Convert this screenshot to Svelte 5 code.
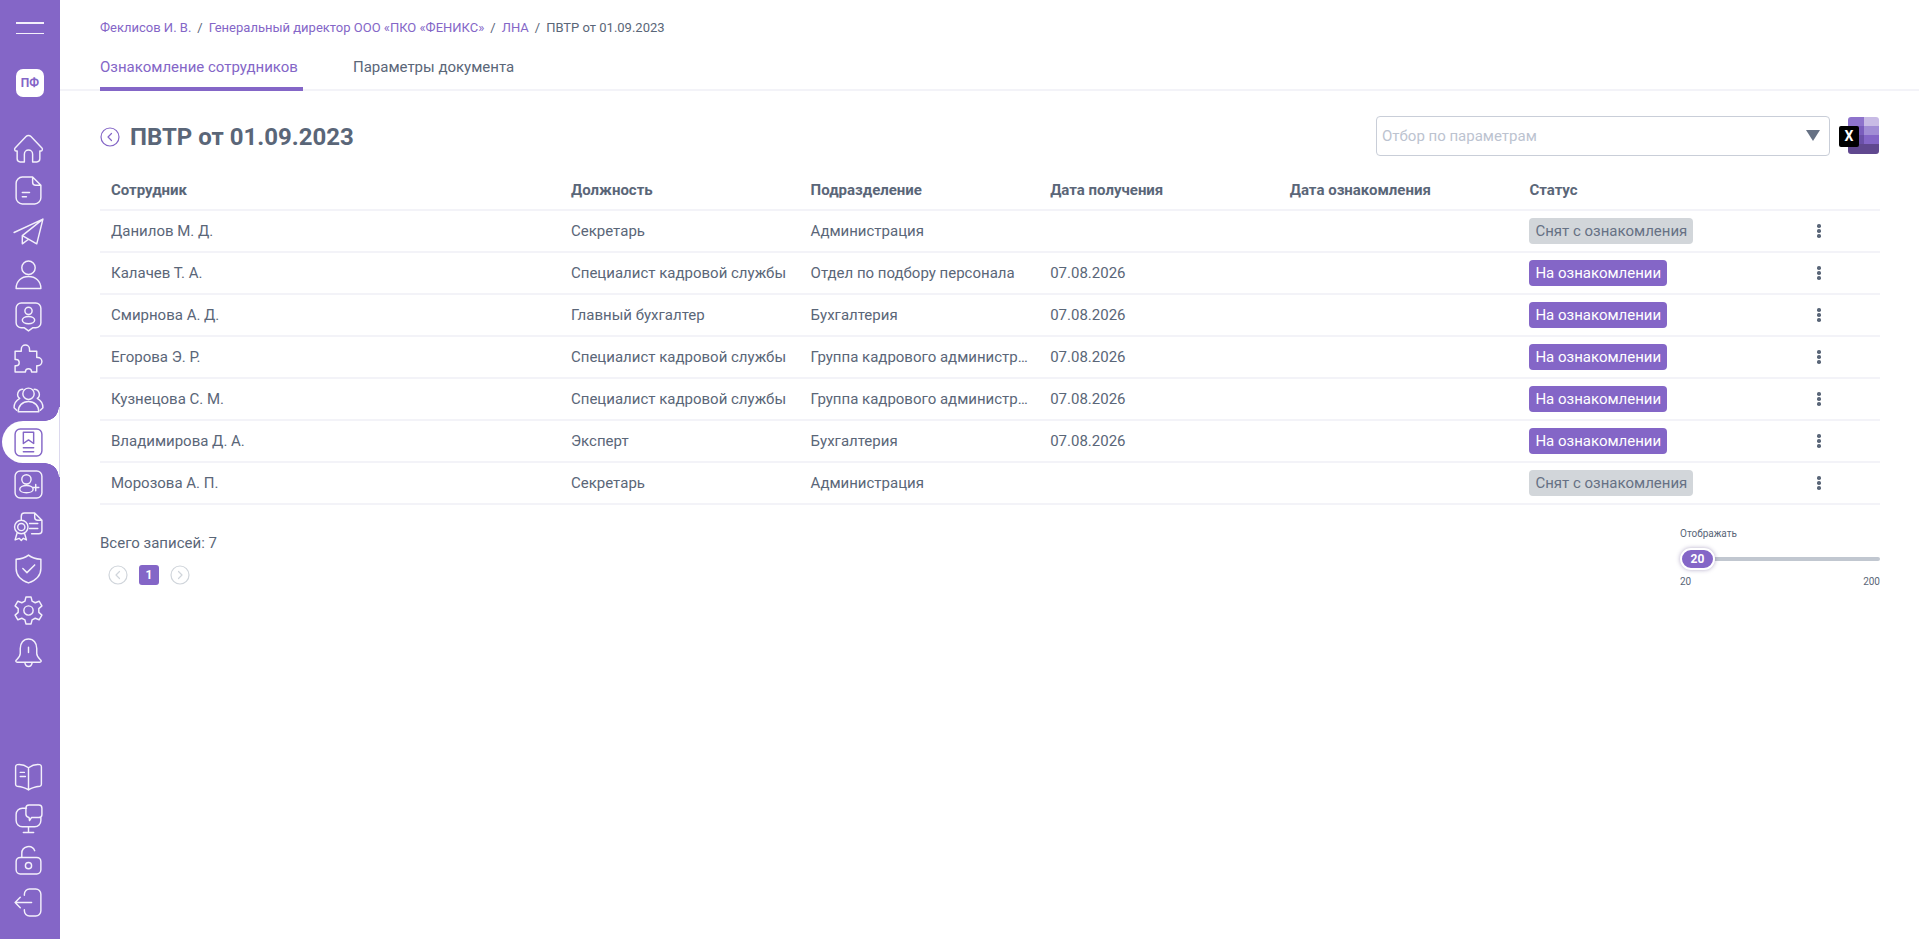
<script>
    const topIcons = [
        'M3 15.500 13.600 4.400a3.300 3.300 0 0 1 4.800 0L29 15.500c1 1.200.3 3-1.200 3H27V26a3 3 0 0 1-3 3h-4v-7.500a4 4 0 0 0-8 0V29H8a3 3 0 0 1-3-3v-7.500H4.200c-1.500 0-2.200-1.800-1.200-3Z',
        'M20 3H10a6 6 0 0 0-6 6v14a6 6 0 0 0 6 6h12a6 6 0 0 0 6-6V11M20 3l8 8h-5a3 3 0 0 1-3-3ZM10 18h7M10 22h4',
        'M2 16 30 3 24 27 10 19 30 3M10 19v8l6-4.500',
        'M16 3a6.500 6.500 0 1 1 0 13 6.500 6.500 0 0 1 0-13ZM4 29.500c0-7 5-11.500 12-11.500s12 4.500 12 11.500Z',
        'M9 3h14a5 5 0 0 1 5 5v14a5 5 0 0 1-5 5h-3l-4 3-4-3H9a5 5 0 0 1-5-5V8a5 5 0 0 1 5-5ZM16 7a3.500 3.500 0 1 1 0 7 3.500 3.500 0 0 1 0-7ZM16 16c3.500 0 6 1.600 6 3.500S19.500 23 16 23s-6-1.600-6-3.500S12.500 16 16 16Z',
        'M3 9h6V7a4 4 0 0 1 8 0v2h7v6h1a4 4 0 0 1 0 8h-1v6h-5a3 3 0 0 0-6 0H3v-6h1a3 3 0 0 0 0-6H3Z',
        'M16 4a5.500 5.500 0 1 1 0 11 5.500 5.500 0 0 1 0-11ZM6 27c0-6 4-10 10-10s10 4 10 10ZM10.500 5a5 5 0 0 0-3 9C4 16 2 19 2 23l2.500 2.500M21.500 5a5 5 0 0 1 3 9c3.500 2 5.500 5 5.500 9l-2.500 2.500'
    ];
    const lowerIcons = [
        'M8 3h16a5 5 0 0 1 5 5v16a5 5 0 0 1-5 5H8a5 5 0 0 1-5-5V8a5 5 0 0 1 5-5ZM14 6.500a4.500 4.500 0 1 1 0 9 4.500 4.500 0 0 1 0-9ZM14 17c3.800 0 6.500 1.600 6.500 3.500S17.800 24 14 24s-6.500-1.600-6.500-3.500S10.200 17 14 17ZM23 16v6M20 19h6',
        'M9 10V6a3 3 0 0 1 3-3h10l7 7v10a3 3 0 0 1-3 3h-7M22 3v4a3 3 0 0 0 3 3h4M17 13h8M17 18h8M9 10a6.500 6.500 0 1 1 0 13 6.500 6.500 0 0 1 0-13ZM9 13a3.500 3.500 0 1 1 0 7 3.500 3.500 0 0 1 0-7ZM5 22l-2 7 4-1.500 2 2 2-2 3 1.500-2-7',
        'M16 3c3 2.500 7 3.800 12 4v9c0 7-5 11.500-12 14-7-2.500-12-7-12-14V7c5-.2 9-1.500 12-4ZM10.500 16l4 4 7.500-7.500',
        'M13.500 3h5l1 4 3 1.500 3.800-1.500 2.700 4.500-3 2.700v3.600l3 2.700-2.700 4.500-3.800-1.500-3 1.500-1 4h-5l-1-4-3-1.500-3.800 1.500L3 20.500l3-2.700v-3.600l-3-2.700L5.700 7l3.800 1.500 3-1.500ZM16 11.500a4.500 4.500 0 1 1 0 9 4.500 4.500 0 0 1 0-9Z',
        'M16 3c5 0 8 4 8 9v5c0 3 2 4.500 4 6.500.6.800.2 2-1 2H5c-1.200 0-1.600-1.200-1-2 2-2 4-3.500 4-6.500v-5c0-5 3-9 8-9ZM12.500 26c.5 2.500 2 3.500 3.500 3.500s3-1 3.500-3.500M16 11v5'
    ];
    const bottomIcons = [
        'M16 7.500C12.500 5 8 4 5 4.500 4 4.700 3.500 5.500 3.500 6.500v17c0 1 .5 1.800 1.500 2 4 .5 8 1.500 11 3.500 3-2 7-3 11-3.500 1-.2 1.500-1 1.500-2v-17c0-1-.5-1.800-1.500-2-3-.5-7.500.5-11 3ZM16 7.500V29M8 12h4M8 16h5',
        'M14 6H10a6 6 0 0 0-6 6v6a6 6 0 0 0 6 6h12a6 6 0 0 0 6-6v-3M16 24v5M11 29.500h10M17 3h9a3 3 0 0 1 3 3v6a3 3 0 0 1-3 3h-7l-2 3-.5-3a3.500 3.500 0 0 1-3-3V6a3 3 0 0 1 3-3Z',
        'M4 17a4 4 0 0 1 4-4h16a4 4 0 0 1 4 4v8a4 4 0 0 1-4 4H8a4 4 0 0 1-4-4ZM16 18a3 3 0 1 1 0 6 3 3 0 0 1 0-6ZM9.500 13V9a6.500 6.500 0 0 1 12.500-2.500',
        'M12 9V8a5 5 0 0 1 5-5h6a5 5 0 0 1 5 5v16a5 5 0 0 1-5 5h-6a5 5 0 0 1-5-5v-1M3 16h16M3 16l5-5M3 16l5 5'
    ];

    const rows = [
        { name: 'Данилов М. Д.', post: 'Секретарь', dept: 'Администрация', date: '', active: false },
        { name: 'Калачев Т. А.', post: 'Специалист кадровой службы', dept: 'Отдел по подбору персонала', date: '07.08.2026', active: true },
        { name: 'Смирнова А. Д.', post: 'Главный бухгалтер', dept: 'Бухгалтерия', date: '07.08.2026', active: true },
        { name: 'Егорова Э. Р.', post: 'Специалист кадровой службы', dept: 'Группа кадрового администрирования', date: '07.08.2026', active: true },
        { name: 'Кузнецова С. М.', post: 'Специалист кадровой службы', dept: 'Группа кадрового администрирования', date: '07.08.2026', active: true },
        { name: 'Владимирова Д. А.', post: 'Эксперт', dept: 'Бухгалтерия', date: '07.08.2026', active: true },
        { name: 'Морозова А. П.', post: 'Секретарь', dept: 'Администрация', date: '', active: false }
    ];
</script>

<div class="page">
    <aside class="sidebar">
        <div class="burger"><span></span><span></span></div>
        <div class="logo">ПФ</div>

        <nav class="menu">
            {#each topIcons as d}
                <div class="item"><svg viewBox="0 0 32 32"><path {d} /></svg></div>
            {/each}
            <div class="item active">
                <svg viewBox="0 0 32 32">
                    <path d="M8 3h16a5 5 0 0 1 5 5v16a5 5 0 0 1-5 5H8a5 5 0 0 1-5-5V8a5 5 0 0 1 5-5ZM11 6h10v11l-5-3.500-5 3.500ZM11 21h10M11 25h10" />
                </svg>
            </div>
            {#each lowerIcons as d}
                <div class="item"><svg viewBox="0 0 32 32"><path {d} /></svg></div>
            {/each}
        </nav>

        <nav class="menu bottom">
            {#each bottomIcons as d}
                <div class="item"><svg viewBox="0 0 32 32"><path {d} /></svg></div>
            {/each}
        </nav>
    </aside>

    <main class="main">
        <header class="top">
            <div class="crumbs">
                <a href="/">Феклисов И. В.</a><i>/</i><a href="/">Генеральный директор ООО «ПКО «ФЕНИКС»</a><i>/</i><a href="/">ЛНА</a><i>/</i><span>ПВТР от 01.09.2023</span>
            </div>
            <div class="tabs">
                <div class="tab on">Ознакомление сотрудников</div>
                <div class="tab">Параметры документа</div>
            </div>
        </header>

        <section class="content">
            <div class="titlebar">
                <div class="title">
                    <svg class="back" viewBox="0 0 20 20"><circle cx="10" cy="10" r="9" /><path d="M11.500 6.500 8 10l3.500 3.500" /></svg>
                    <h1>ПВТР от 01.09.2023</h1>
                </div>
                <div class="tools">
                    <div class="select">
                        <span>Отбор по параметрам</span>
                        <b class="caret"></b>
                    </div>
                    <div class="excel">
                        <div class="sheet"><i></i><i></i><i></i><i></i><i></i><i></i><i></i><i></i></div>
                        <div class="x">X</div>
                    </div>
                </div>
            </div>

            <div class="table">
                <div class="row head">
                    <div>Сотрудник</div>
                    <div>Должность</div>
                    <div>Подразделение</div>
                    <div>Дата получения</div>
                    <div>Дата ознакомления</div>
                    <div>Статус</div>
                    <div></div>
                </div>
                {#each rows as r}
                    <div class="row">
                        <div>{r.name}</div>
                        <div>{r.post}</div>
                        <div class="dept">{r.dept}</div>
                        <div>{r.date}</div>
                        <div></div>
                        <div><span class="badge" class:violet={r.active}>{r.active ? 'На ознакомлении' : 'Снят с ознакомления'}</span></div>
                        <div class="dots"><i></i><i></i><i></i></div>
                    </div>
                {/each}
            </div>

            <div class="foot">
                <div>
                    <div class="total">Всего записей: 7</div>
                    <div class="pager">
                        <svg viewBox="0 0 20 20"><circle cx="10" cy="10" r="9" /><path d="M11.500 6.500 8 10l3.500 3.500" /></svg>
                        <span class="num">1</span>
                        <svg viewBox="0 0 20 20"><circle cx="10" cy="10" r="9" /><path d="M8.500 6.500 12 10l-3.500 3.500" /></svg>
                    </div>
                </div>
                <div class="range">
                    <div class="cap">Отображать</div>
                    <div class="track"><span class="thumb">20</span></div>
                    <div class="ends"><span>20</span><span>200</span></div>
                </div>
            </div>
        </section>
    </main>
</div>

<style>
    :global(body) {
        margin: 0;
        background: #fff;
        font-family: Roboto, "Liberation Sans", sans-serif;
    }

    .page {
        display: flex;
        height: 939px;
        overflow: hidden;
        color: #5a6678;
        font-size: 15px;
    }

    .sidebar {
        width: 60px;
        flex: none;
        background: #8466c7;
        display: flex;
        flex-direction: column;
        align-items: center;
    }

    .burger {
        width: 28px;
        margin-top: 22px;
        height: 12px;
        display: flex;
        flex-direction: column;
        justify-content: space-between;
    }

    .burger span {
        height: 1.500px;
        background: #f3f0fb;
    }

    .logo {
        width: 28px;
        height: 28px;
        margin-top: 35px;
        background: #fff;
        border-radius: 7px;
        color: #8466c7;
        font-size: 12px;
        font-weight: 700;
        display: flex;
        align-items: center;
        justify-content: center;
    }

    .menu {
        width: 100%;
        margin-top: 30px;
        display: flex;
        flex-direction: column;
    }

    .menu.bottom {
        margin-top: auto;
        margin-bottom: 16px;
    }

    .item {
        height: 42px;
        padding-right: 4px;
        display: flex;
        align-items: center;
        justify-content: center;
        position: relative;
    }

    .item svg {
        width: 33px;
        height: 33px;
        fill: none;
        stroke: #f3f0fb;
        stroke-width: 1.400;
        stroke-linecap: round;
        stroke-linejoin: round;
    }

    .active {
        margin-left: 2px;
        padding-right: 6px;
        background: #fff;
        border-radius: 21px 0 0 21px;
        box-shadow: inset -1px 0 0 #dcd9ee;
    }

    .active svg {
        stroke: #8466c7;
    }

    .active::before,
    .active::after {
        content: "";
        position: absolute;
        right: 0;
        box-sizing: border-box;
        width: 15px;
        height: 14px;
        border-right: 1px solid #dcd9ee;
    }

    .active::before {
        top: -14px;
        background: radial-gradient(circle at 0 0, #8466c7 13.500px, #fff 14px);
    }

    .active::after {
        bottom: -14px;
        background: radial-gradient(circle at 0 100%, #8466c7 13.500px, #fff 14px);
    }

    .main {
        flex: 1;
        min-width: 0;
    }

    .top {
        border-bottom: 2px solid #f3f3f8;
        padding: 0 39px 0 40px;
    }

    .crumbs {
        padding-top: 21px;
        height: 14px;
        line-height: 14px;
        font-size: 13px;
    }

    .crumbs a {
        color: #8466c7;
        text-decoration: none;
    }

    .crumbs i {
        font-style: normal;
        margin: 0 6px;
    }

    .tabs {
        display: flex;
        gap: 50px;
        margin-top: 24px;
        height: 30px;
    }

    .tab {
        box-sizing: border-box;
        height: 30px;
        line-height: 17px;
        padding-right: 5px;
    }

    .tab.on {
        height: 32px;
        color: #8466c7;
        border-bottom: 4px solid #8466c7;
    }

    .content {
        padding: 0 39px 0 40px;
    }

    .titlebar {
        display: flex;
        justify-content: space-between;
        align-items: center;
        height: 91px;
    }

    .title {
        display: flex;
        align-items: center;
        gap: 10px;
    }

    .back {
        width: 20px;
        height: 20px;
        fill: none;
        stroke: #8466c7;
        stroke-width: 1.200;
        stroke-linecap: round;
        stroke-linejoin: round;
    }

    h1 {
        margin: 0;
        font-size: 24px;
        font-weight: 700;
        line-height: 30px;
    }

    .tools {
        display: flex;
        align-items: center;
        gap: 8px;
        margin-top: -2px;
    }

    .select {
        width: 454px;
        height: 40px;
        box-sizing: border-box;
        border: 1px solid #c9ced8;
        border-radius: 4px;
        padding: 0 9px 0 5px;
        display: flex;
        align-items: center;
        justify-content: space-between;
        color: #bcc3d0;
    }

    .caret {
        border-left: 7px solid transparent;
        border-right: 7px solid transparent;
        border-top: 11px solid #667184;
    }

    .excel {
        width: 41px;
        height: 38px;
        position: relative;
        margin-right: 1px;
    }

    .sheet {
        position: absolute;
        left: 10px;
        top: 0;
        width: 31px;
        height: 37px;
        border-radius: 3px;
        overflow: hidden;
        display: grid;
        grid-template-columns: 1fr 1fr;
        grid-template-rows: repeat(4, 1fr);
    }

    .sheet i:nth-child(1) { background: #8e73cc; }
    .sheet i:nth-child(2) { background: #c8bbe5; }
    .sheet i:nth-child(3) { background: #7a5dbd; }
    .sheet i:nth-child(4) { background: #a18dd5; }
    .sheet i:nth-child(5) { background: #6a50a8; }
    .sheet i:nth-child(6) { background: #8466c7; }
    .sheet i:nth-child(7) { background: #60488f; }
    .sheet i:nth-child(8) { background: #60488f; }

    .x {
        position: absolute;
        left: 1px;
        top: 9px;
        width: 20px;
        height: 21px;
        background: #000;
        border-radius: 2px;
        color: #fff;
        font-size: 14px;
        font-weight: 700;
        line-height: 21px;
        text-align: center;
    }

    .row {
        display: grid;
        grid-template-columns: 460px repeat(4, 239.6px) 1fr 60px;
        align-items: center;
        height: 40px;
        border-bottom: 2px solid #f3f3f8;
    }

    .row > div {
        padding-left: 11px;
        white-space: nowrap;
        overflow: hidden;
        text-overflow: ellipsis;
    }

    .row > .dept {
        padding-right: 10px;
    }

    .row.head {
        height: 27px;
        font-weight: 700;
        align-items: start;
        line-height: 16px;
    }

    .badge {
        display: inline-block;
        height: 26px;
        line-height: 26px;
        padding: 0 6px;
        border-radius: 4px;
        background: #d2d6da;
        color: #667184;
        vertical-align: top;
    }

    .badge.violet {
        background: #8466c7;
        color: #fff;
    }

    .row > .dots {
        display: flex;
        flex-direction: column;
        align-items: center;
        gap: 1.500px;
        padding: 0;
        width: 4px;
        margin-left: -3px;
    }

    .dots i {
        width: 3.500px;
        height: 3.500px;
        border-radius: 50%;
        background: #5a6678;
    }

    .foot {
        display: flex;
        justify-content: space-between;
        margin-top: 28px;
    }

    .total {
        line-height: 20px;
    }

    .pager {
        display: flex;
        align-items: center;
        gap: 11px;
        margin: 12px 0 0 8px;
    }

    .pager svg {
        width: 20px;
        height: 20px;
        fill: none;
        stroke: #d0d5db;
        stroke-width: 1.200;
        stroke-linecap: round;
        stroke-linejoin: round;
    }

    .num {
        width: 20px;
        height: 20px;
        border-radius: 3px;
        background: #8466c7;
        color: #fff;
        font-size: 12px;
        font-weight: 700;
        line-height: 20px;
        text-align: center;
    }

    .range {
        width: 200px;
        font-size: 10px;
        margin-top: -5px;
    }

    .cap {
        line-height: 12px;
    }

    .track {
        position: relative;
        height: 4px;
        margin-top: 17px;
        border-radius: 2px;
        background: #c1c7d0;
    }

    .thumb {
        position: absolute;
        left: 0;
        top: -9px;
        width: 35px;
        height: 22px;
        box-sizing: border-box;
        border: 2px solid #fff;
        border-radius: 11px;
        background: #8466c7;
        box-shadow: 0 0 4px rgba(70, 50, 120, 0.4);
        color: #fff;
        font-size: 12px;
        font-weight: 700;
        line-height: 18px;
        text-align: center;
    }

    .ends {
        display: flex;
        justify-content: space-between;
        margin-top: 15px;
        line-height: 12px;
    }
</style>
